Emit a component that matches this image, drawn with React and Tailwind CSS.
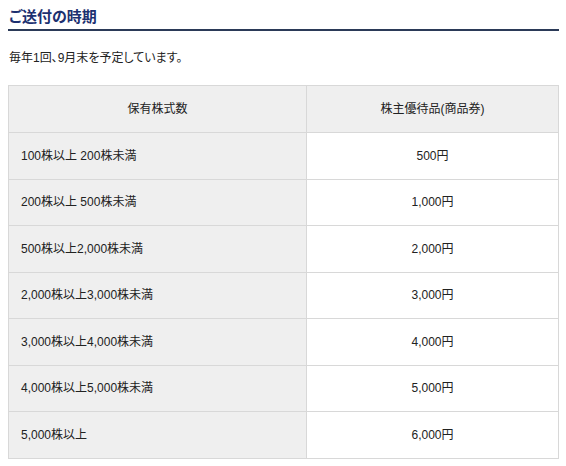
const rows = [
  ["100株以上 200株未満", "500円"],
  ["200株以上 500株未満", "1,000円"],
  ["500株以上2,000株未満", "2,000円"],
  ["2,000株以上3,000株未満", "3,000円"],
  ["3,000株以上4,000株未満", "4,000円"],
  ["4,000株以上5,000株未満", "5,000円"],
  ["5,000株以上", "6,000円"],
];

const font = {
  fontFamily: '"Liberation Sans", "Noto Sans CJK JP", sans-serif',
};

export default function App() {
  return (
    <div className="w-[566px] h-[466px] bg-white text-[#222] overflow-hidden" style={font}>
      <div className="pl-2 pr-[7px]">
        <h2 className="pt-[7px] pl-px pb-[2px] text-[15px] leading-[20px] font-bold text-[#1c3070] border-b-2 border-[#2b3a58] [font-feature-settings:'palt']">
          ご送付の時期
        </h2>
        <p className="mt-[19px] pl-px text-[12px] leading-[16px] [font-feature-settings:'palt']">
          毎年1回、9月末を予定しています。
        </p>
        <table className="mt-[19px] w-[551px] border-collapse text-[12px] [font-feature-settings:'palt']">
          <thead>
            <tr className="bg-[#efefef]">
              <th className="w-[298px] h-[47px] border border-[#d8d8d8] font-normal text-center">
                保有株式数
              </th>
              <th className="h-[47px] border border-[#d8d8d8] font-normal text-center">
                株主優待品(商品券)
              </th>
            </tr>
          </thead>
          <tbody>
            {rows.map(([range, value]) => (
              <tr key={range}>
                <td className="h-[46.5px] border border-[#d8d8d8] bg-[#efefef] pl-3 text-left">
                  {range}
                </td>
                <td className="h-[46.5px] border border-[#d8d8d8] bg-white text-center">
                  {value}
                </td>
              </tr>
            ))}
          </tbody>
        </table>
      </div>
    </div>
  );
}
